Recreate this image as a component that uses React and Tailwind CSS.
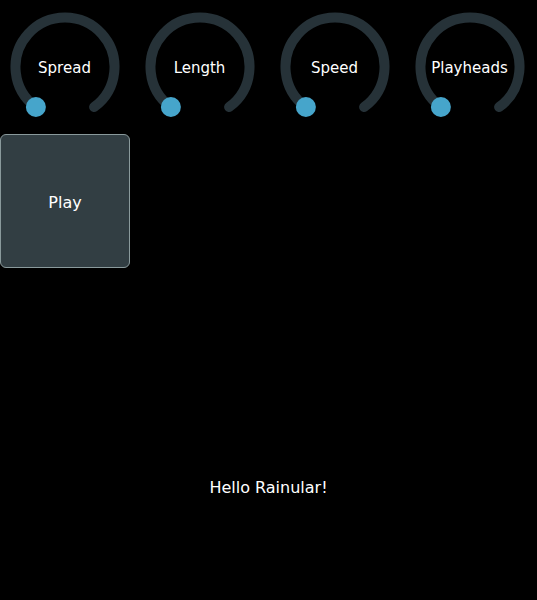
import React from "react";

function Knob({ label }) {
  return (
    <div className="relative w-[110px] h-[110px] shrink-0">
      <svg width="110" height="110" viewBox="0 0 110 110" className="absolute inset-0">
        <path
          d="M 25.9 95.05 A 49.5 49.5 0 1 1 84.1 95.05"
          fill="none"
          stroke="#263238"
          strokeWidth="10"
          strokeLinecap="round"
        />
        <circle cx="25.9" cy="95.05" r="10" fill="#46a5cb" />
      </svg>
      <div className="absolute inset-0 pt-[4px] flex items-center justify-center text-white text-[15px]">
        {label}
      </div>
    </div>
  );
}

export default function App() {
  return (
    <div
      className="bg-black w-[537px] h-[600px] overflow-hidden"
      style={{ fontFamily: '"DejaVu Sans", Verdana, sans-serif' }}
    >
      <div className="flex gap-[25px] pl-[9.5px] pt-[11.5px]">
        <Knob label="Spread" />
        <Knob label="Length" />
        <Knob label="Speed" />
        <Knob label="Playheads" />
      </div>
      <button className="mt-[12.5px] w-[130px] h-[134px] pt-[4px] flex items-center justify-center bg-[#323e43] border border-[#8a9a9c] rounded-[6px] text-white text-[16px]">
        Play
      </button>
      <div className="mt-[210px] text-center text-white text-[16px] leading-[19px]">
        Hello Rainular!
      </div>
    </div>
  );
}
